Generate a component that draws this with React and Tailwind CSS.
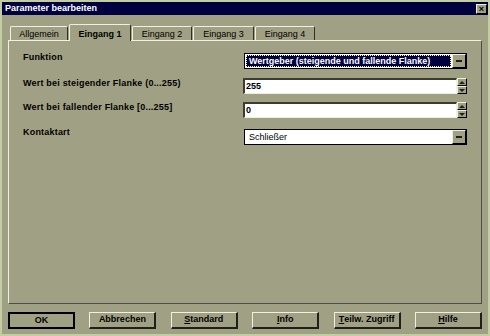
import React from "react";

const F = { fontFamily: '"Liberation Sans", Arial, sans-serif' };

function DropBtn() {
  return (
    <div className="w-[14px] h-full bg-[#a0a084] border-t border-l border-t-[#f0f0e0] border-l-[#f0f0e0] border-r border-b border-r-[#000] border-b-[#000] flex items-center justify-center">
      <div className="w-[6px] h-[2px] bg-[#202018]" />
    </div>
  );
}

function Combo({ text, focused }) {
  return (
    <div className="w-[223px] h-[16px] border border-black bg-white flex items-stretch">
      <div className="flex-1 p-[1px] flex">
        {focused ? (
          <div className="flex-1 bg-[#000040] border border-dotted border-[#ffff80] text-white text-[9px] font-bold leading-[10px] pl-[2px] whitespace-nowrap overflow-hidden">
            {text}
          </div>
        ) : (
          <div className="flex-1 text-black text-[9px] leading-[12px] pl-[3px] whitespace-nowrap">
            {text}
          </div>
        )}
      </div>
      <DropBtn />
    </div>
  );
}

function Spin({ value }) {
  return (
    <div className="flex w-[224px] h-[16px]">
      <div className="w-[214px] h-full bg-white border-t-2 border-l-2 border-t-[#3c3c30] border-l-[#3c3c30] border-b border-r border-b-[#f0f0e0] border-r-[#f0f0e0] text-[9px] font-bold leading-[12px] pl-[1px] text-black">
        {value}
      </div>
      <div className="w-[10px] h-full flex flex-col">
        <div className="flex-1 bg-[#a0a084] border-t border-l border-t-[#f0f0e0] border-l-[#f0f0e0] border-b border-r border-b-[#000] border-r-[#000] flex items-center justify-center">
          <div className="w-0 h-0 border-l-[3px] border-r-[3px] border-b-[3px] border-l-transparent border-r-transparent border-b-[#202018]" />
        </div>
        <div className="flex-1 bg-[#a0a084] border-t border-l border-t-[#f0f0e0] border-l-[#f0f0e0] border-b border-r border-b-[#000] border-r-[#000] flex items-center justify-center">
          <div className="w-0 h-0 border-l-[3px] border-r-[3px] border-t-[3px] border-l-transparent border-r-transparent border-t-[#202018]" />
        </div>
      </div>
    </div>
  );
}

function Button({ label, u, def }) {
  const cls = def
    ? "border-2 border-black"
    : "border-t border-l border-t-[#f0f0e0] border-l-[#f0f0e0] border-b-2 border-r-2 border-b-[#202018] border-r-[#202018]";
  let content = label;
  if (u) {
    content = (
      <>
        <span className="underline">{label[0]}</span>
        {label.slice(1)}
      </>
    );
  }
  return (
    <div
      className={`w-[67px] h-[17px] flex items-center justify-center text-[9px] font-bold text-black bg-[#a0a084] ${cls}`}
    >
      {content}
    </div>
  );
}

function Tab({ label, w, selected }) {
  if (selected) {
    return (
      <div
        className={`${w} h-[17px] -mb-[1px] relative z-10 bg-[#a0a084] border-t border-l border-t-[#f0f0e0] border-l-[#f0f0e0] border-r border-r-[#303024] rounded-tl-[2px] rounded-tr-[2px] flex items-start justify-center pt-[3px] text-[9px] font-bold text-black`}
      >
        {label}
      </div>
    );
  }
  return (
    <div
      className={`${w} h-[14px] bg-[#a0a084] border-t border-l border-t-[#f0f0e0] border-l-[#f0f0e0] border-r border-r-[#303024] rounded-tl-[2px] rounded-tr-[2px] flex items-start justify-center pt-[1px] text-[9px] text-black`}
    >
      {label}
    </div>
  );
}

export default function App() {
  return (
    <div
      style={F}
      className="w-[490px] h-[336px] bg-[#a0a084] border-2 border-[#c4cca4] flex flex-col overflow-hidden"
    >
      <div className="h-[13px] bg-[#000040] flex items-center justify-between pl-[3px] pr-[1px]">
        <span className="text-white text-[9px] font-bold leading-none">Parameter bearbeiten</span>
        <div className="w-[11px] h-[10px] mt-[1px] bg-[#a0a084] border-t border-l border-t-[#f0f0e0] border-l-[#f0f0e0] border-b border-r border-b-black border-r-black flex items-center justify-center text-[9px] font-bold leading-none text-black">
          ×
        </div>
      </div>
      <div className="flex-1 flex flex-col px-[6px] pt-[9px] pb-[5px]">
        <div className="h-[16px] flex items-end pl-[2px] gap-[1px]">
          <Tab label="Allgemein" w="w-[58px]" />
          <Tab label="Eingang 1" w="w-[62px]" selected />
          <Tab label="Eingang 2" w="w-[60px]" />
          <Tab label="Eingang 3" w="w-[61px]" />
          <Tab label="Eingang 4" w="w-[60px]" />
        </div>
        <div className="h-[264px] border-t border-l border-t-[#f0f0e0] border-l-[#f0f0e0] border-b border-r border-b-[#505040] border-r-[#505040] pt-[12px] pl-[14px] flex flex-col text-[9px] font-bold text-black">
          <div className="flex items-start">
            <div className="w-[221px] -mt-[2px] tracking-[0.2px]">Funktion</div>
            <Combo text="Wertgeber (steigende und fallende Flanke)" focused />
          </div>
          <div className="flex items-start mt-[9px]">
            <div className="w-[221px] -mt-[1px] tracking-[0.2px]">Wert bei steigender Flanke (0...255)</div>
            <div className="-ml-[1px]">
              <Spin value="255" />
            </div>
          </div>
          <div className="flex items-start mt-[8px]">
            <div className="w-[221px] -mt-[1px] tracking-[0.2px]">Wert bei fallender Flanke [0...255]</div>
            <div className="-ml-[1px]">
              <Spin value="0" />
            </div>
          </div>
          <div className="flex items-start mt-[11px]">
            <div className="w-[221px] -mt-[3px] tracking-[0.2px]">Kontaktart</div>
            <div className="font-normal">
              <Combo text="Schließer" />
            </div>
          </div>
        </div>
        <div className="mt-[8px] flex justify-between">
          <Button label="OK" def />
          <Button label="Abbrechen" />
          <Button label="Standard" u />
          <Button label="Info" u />
          <Button label="Teilw. Zugriff" u />
          <Button label="Hilfe" u />
        </div>
      </div>
    </div>
  );
}
